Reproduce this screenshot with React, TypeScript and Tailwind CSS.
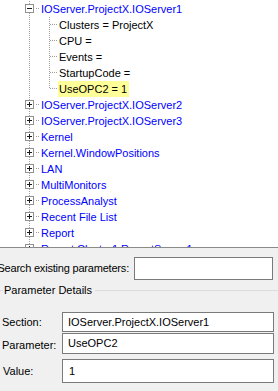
import React from "react";

const DOT = "#a0a0a0";

function dotsV(x: number, y1: number, y2: number, key: string) {
  const out: React.ReactElement[] = [];
  for (let y = y1; y <= y2; y++) {
    if (y % 2 === 0) out.push(<rect key={key + y} x={x} y={y} width={1} height={1} fill={DOT} />);
  }
  return out;
}
function dotsH(y: number, x1: number, x2: number, key: string) {
  const out: React.ReactElement[] = [];
  for (let x = x1; x <= x2; x++) {
    if (x % 2 === 0) out.push(<rect key={key + x} x={x} y={y} width={1} height={1} fill={DOT} />);
  }
  return out;
}

function Box({ plus }: { plus: boolean }) {
  return (
    <g shapeRendering="crispEdges">
      <rect x={25.5} y={3.5} width={8} height={8} fill="#ffffff" stroke="#919191" />
      <rect x={27} y={7} width={5} height={1} fill="#1a1a1a" />
      {plus && <rect x={29} y={5} width={1} height={5} fill="#1a1a1a" />}
    </g>
  );
}

function TopConnector({ plus }: { plus: boolean }) {
  return (
    <svg width={40} height={16} className="shrink-0" shapeRendering="crispEdges">
      {dotsV(29, 0, 15, "v")}
      <Box plus={plus} />
      {dotsH(7, 35, 39, "h")}
    </svg>
  );
}

function ChildConnector({ last }: { last: boolean }) {
  return (
    <svg width={58} height={16} className="shrink-0" shapeRendering="crispEdges">
      {dotsV(29, 0, 15, "v")}
      {dotsV(49, 0, last ? 7 : 15, "c")}
      {dotsH(7, 50, 57, "h")}
    </svg>
  );
}

const children = ["Clusters = ProjectX", "CPU =", "Events =", "StartupCode =", "UseOPC2 = 1"];
const sections = [
  "IOServer.ProjectX.IOServer2",
  "IOServer.ProjectX.IOServer3",
  "Kernel",
  "Kernel.WindowPositions",
  "LAN",
  "MultiMonitors",
  "ProcessAnalyst",
  "Recent File List",
  "Report",
  "Report.Cluster1.ReportServer1",
];

export default function App() {
  const font = { fontFamily: '"Liberation Sans", Arial, sans-serif' };
  return (
    <div className="w-[278px] h-[391px] flex flex-col bg-[#f0f0f0] text-[11px] leading-[13px] text-black overflow-hidden" style={font}>
      <div className="h-[248px] shrink-0 bg-white border-b border-[#8a8a8a] overflow-hidden pt-[1px]">
        <div className="flex items-center h-4">
          <TopConnector plus={false} />
          <span className="pl-[1px] pr-[2px] text-[#0000ff] whitespace-nowrap">IOServer.ProjectX.IOServer1</span>
        </div>
        {children.map((c, i) => (
          <div key={c} className="flex items-center h-4">
            <ChildConnector last={i === children.length - 1} />
            <span
              className={
                "h-4 flex items-center pl-[1px] pr-[2px] whitespace-nowrap " +
                (i === children.length - 1 ? "bg-[#ffff99]" : "")
              }
            >
              {c}
            </span>
          </div>
        ))}
        {sections.map((s) => (
          <div key={s} className="flex items-center h-4">
            <TopConnector plus={true} />
            <span className="pl-[1px] pr-[2px] text-[#0000ff] whitespace-nowrap">{s}</span>
          </div>
        ))}
      </div>

      <div className="flex-1 flex flex-col">
        <div className="flex items-center mt-[9px] h-[23px]">
          <div className="w-[131px] shrink-0 flex justify-end overflow-hidden pr-[2px]">
            <span className="whitespace-nowrap tracking-[-0.2px]">Search existing parameters:</span>
          </div>
          <div className="ml-[3px] w-[139px] h-[23px] bg-white border border-[#7a7a7a]" />
        </div>

        <div className="flex items-center mt-[4px] h-[13px]">
          <div className="w-[3px] h-px bg-[#dcdcdc]" />
          <span className="px-[1px] whitespace-nowrap">Parameter Details</span>
          <div className="flex-1 h-px bg-[#dcdcdc] ml-[2px]" />
        </div>

        <div className="flex flex-col mt-[15px]">
          <div className="flex items-center h-[20px]">
            <span className="w-[62px] pl-[2px] shrink-0">Section:</span>
            <div className="w-[212px] h-[20px] bg-white border border-[#7a7a7a] flex items-center pl-[5px] whitespace-nowrap">
              IOServer.ProjectX.IOServer1
            </div>
          </div>
          <div className="flex items-center h-[21px] mt-[1px]">
            <span className="w-[62px] pl-[2px] shrink-0 self-start mt-[6px]">Parameter:</span>
            <div className="w-[212px] h-[21px] bg-white border border-[#7a7a7a] flex items-center pl-[5px]">
              UseOPC2
            </div>
          </div>
          <div className="flex items-center h-[24px] mt-[5px]">
            <span className="w-[62px] pl-[3px] shrink-0">Value:</span>
            <div className="w-[212px] h-[24px] bg-white border border-[#7a7a7a] flex items-center pl-[6px]">
              1
            </div>
          </div>
        </div>
      </div>
    </div>
  );
}
